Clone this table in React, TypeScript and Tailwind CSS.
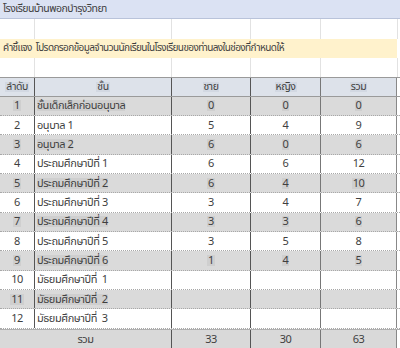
const rows = [
  { no: 1, grade: 'ชั้นเด็กเล็กก่อนอนุบาล', boys: '0', girls: '0', total: '0' },
  { no: 2, grade: 'อนุบาล 1', boys: '5', girls: '4', total: '9' },
  { no: 3, grade: 'อนุบาล 2', boys: '6', girls: '0', total: '6' },
  { no: 4, grade: 'ประถมศึกษาปีที่ 1', boys: '6', girls: '6', total: '12' },
  { no: 5, grade: 'ประถมศึกษาปีที่ 2', boys: '6', girls: '4', total: '10' },
  { no: 6, grade: 'ประถมศึกษาปีที่ 3', boys: '3', girls: '4', total: '7' },
  { no: 7, grade: 'ประถมศึกษาปีที่ 4', boys: '3', girls: '3', total: '6' },
  { no: 8, grade: 'ประถมศึกษาปีที่ 5', boys: '3', girls: '5', total: '8' },
  { no: 9, grade: 'ประถมศึกษาปีที่ 6', boys: '1', girls: '4', total: '5' },
  { no: 10, grade: 'มัธยมศึกษาปีที่  1', boys: '', girls: '', total: '' },
  { no: 11, grade: 'มัธยมศึกษาปีที่  2', boys: '', girls: '', total: '' },
  { no: 12, grade: 'มัธยมศึกษาปีที่  3', boys: '', girls: '', total: '' },
];

const cols = 'grid grid-cols-[34px_137px_79px_70px_77px_1fr] h-[19.33px] items-stretch';

export default function App() {
  return (
    <div
      className="w-[400px] h-[348px] overflow-hidden bg-white text-[11px] tracking-[-0.45px] text-[#3f3f3f]"
      style={{ fontFamily: '"Noto Sans Thai", "Noto Sans", "DejaVu Sans", sans-serif' }}
    >
      {/* title */}
      <div className="h-[19.33px] bg-[#dbe2f3] border-b border-[#b9c3da] flex items-center pl-[3px] leading-none text-[10.5px] tracking-[-0.55px]">
        โรงเรียนบ้านพอกบำรุงวิทยา
      </div>

      {/* blank gridline row */}
      <div className={cols}>
        <div />
        <div className="border-l border-[#e2e2e2]" />
        <div className="border-l border-[#e2e2e2]" />
        <div className="border-l border-[#e2e2e2]" />
        <div className="border-l border-[#e2e2e2]" />
        <div className="border-l border-[#e2e2e2]" />
      </div>

      {/* note */}
      <div className="h-[19.33px] w-[397px] bg-[#fff2cc] flex items-center pl-[3px] leading-none whitespace-nowrap text-[10px] tracking-[-0.6px]">
        คำชี้แจง&nbsp;&nbsp;โปรดกรอกข้อมูลจำนวนนักเรียนในโรงเรียนของท่านลงในช่องที่กำหนดให้
      </div>

      <div className={cols}>
        <div />
        <div className="border-l border-[#e2e2e2]" />
        <div className="border-l border-[#e2e2e2]" />
        <div className="border-l border-[#e2e2e2]" />
        <div className="border-l border-[#e2e2e2]" />
        <div className="border-l border-[#e2e2e2]" />
      </div>

      {/* header */}
      <div className={`${cols} bg-[#dde2ea] border-t border-[#9a9a9a] border-b border-b-[#9a9a9a] leading-none text-[10.5px]`}>
        <div className="flex items-center justify-center">
          <span className="bg-[#d2d8e2] px-px">ลำดับ</span>
        </div>
        <div className="border-l border-[#555] flex items-center justify-center">
          <span className="bg-[#d2d8e2] px-px">ชั้น</span>
        </div>
        <div className="border-l border-[#555] flex items-center justify-center">
          <span className="bg-[#d2d8e2] px-px">ชาย</span>
        </div>
        <div className="border-l border-[#555] flex items-center justify-center">
          <span className="bg-[#d2d8e2] px-px">หญิง</span>
        </div>
        <div className="border-l border-[#777] border-r border-r-[#888] flex items-center justify-center">
          <span className="bg-[#d2d8e2] px-px">รวม</span>
        </div>
        <div className="bg-white" />
      </div>

      {/* data rows */}
      {rows.map((r) => {
        const odd = r.no % 2 === 1;
        const hl = odd ? 'bg-[#cfcfcf]' : '';
        return (
          <div
            key={r.no}
            className={`${cols} leading-none border-b border-dotted border-[#a8a8a8] ${odd ? 'bg-[#dadada]' : 'bg-white'}`}
          >
            <div className="flex items-center justify-center">
              <span className={`${hl} px-px`}>{r.no}</span>
            </div>
            <div className="border-l border-[#555] flex items-center pl-[2px] whitespace-pre">
              <span className={hl}>{r.grade}</span>
            </div>
            <div className="border-l border-[#555] flex items-center justify-center">
              {r.boys && <span className={`${hl} px-px`}>{r.boys}</span>}
            </div>
            <div className="border-l border-[#555] flex items-center justify-center">
              {r.girls && <span className={`${hl} px-px`}>{r.girls}</span>}
            </div>
            <div className="border-l border-[#777] border-r border-r-[#888] flex items-center justify-center">
              {r.total && <span className={`${hl} px-px`}>{r.total}</span>}
            </div>
            <div className="bg-white" />
          </div>
        );
      })}

      {/* total */}
      <div className="grid grid-cols-[171px_79px_70px_77px_1fr] h-[20px] bg-[#d9d9d9] border-t border-[#b0b0b0] leading-none">
        <div className="flex items-center justify-center">รวม</div>
        <div className="border-l border-[#555] flex items-center justify-center">33</div>
        <div className="border-l border-[#555] flex items-center justify-center">30</div>
        <div className="border-l border-[#777] border-r border-r-[#888] flex items-center justify-center">63</div>
        <div className="bg-white" />
      </div>
    </div>
  );
}
